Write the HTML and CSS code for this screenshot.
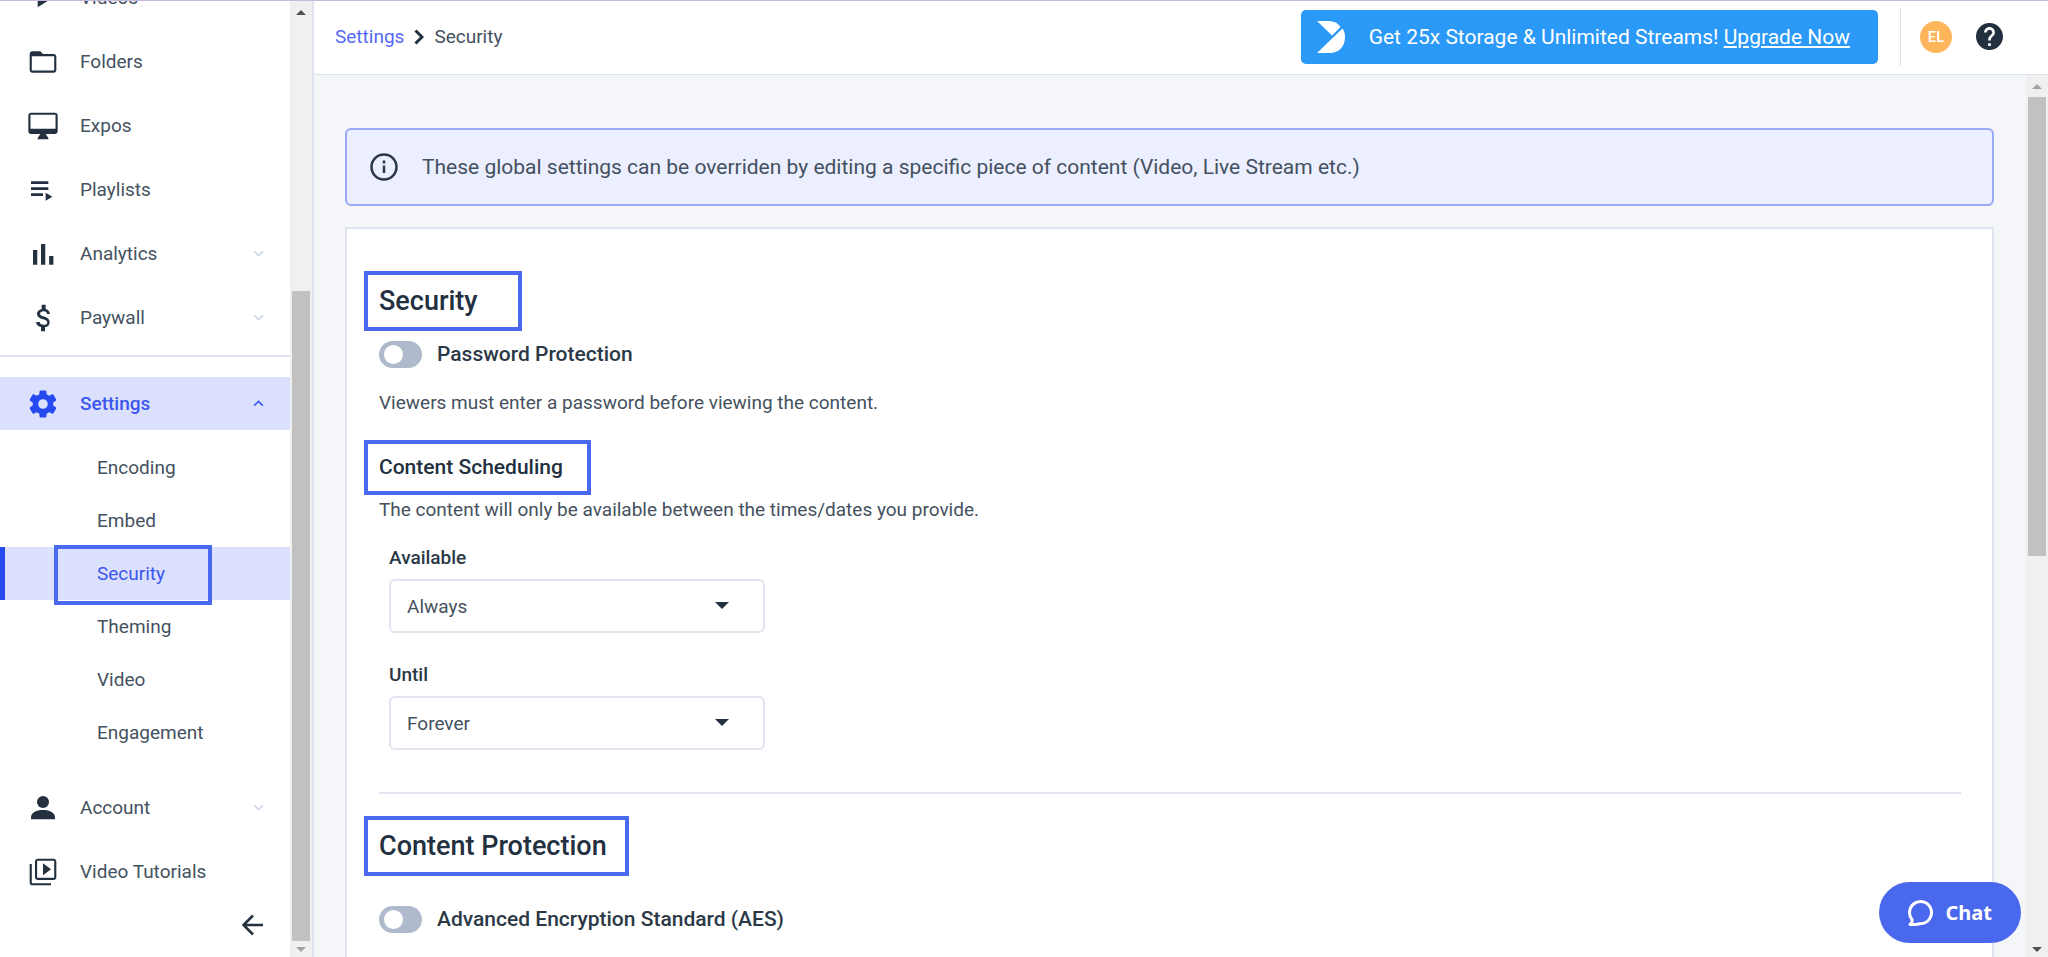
FILE: index.html
```html
<!DOCTYPE html>
<html lang="en">
<head>
    <meta charset="UTF-8">
    <meta name="viewport" content="width=device-width, initial-scale=1.0">
    <title>Security Settings</title>
    <link rel="stylesheet" href="styles.css">
</head>
<body>
    <aside class="sidebar">
        <nav class="menu">
            <a class="menu-item" href="#">
                <svg class="icon" viewBox="0 0 24 24"><path d="M8 5v14l11-7z"/></svg>
                <span>Videos</span>
            </a>
            <a class="menu-item" href="#">
                <svg class="icon" viewBox="0 0 24 24"><path d="M20 6h-8l-2-2H4c-1.100 0-1.990.900-1.990 2L2 18c0 1.100.900 2 2 2h16c1.100 0 2-.900 2-2V8c0-1.100-.900-2-2-2zm.400 12.400H3.600V7.600h16.800v10.800z"/></svg>
                <span>Folders</span>
            </a>
            <a class="menu-item" href="#">
                <svg class="icon" viewBox="0 0 24 24"><path d="M21 2H3c-1.100 0-2 .900-2 2v12c0 1.100.900 2 2 2h7l-2 3v1h8v-1l-2-3h7c1.100 0 2-.900 2-2V4c0-1.100-.900-2-2-2zm.400 12H2.600V3.600h18.800V14z"/></svg>
                <span>Expos</span>
            </a>
            <a class="menu-item" href="#">
                <svg class="icon" viewBox="0 0 24 24"><path d="M3 5.500h13v2H3zM3 10h13v2H3zM3 14.500h9v2H3zM14 14v6l5-3z"/></svg>
                <span>Playlists</span>
            </a>
            <a class="menu-item" href="#">
                <svg class="icon" viewBox="0 0 24 24"><path d="M4.500 9h3.200v11H4.500zM10.500 4.500h3.200V20h-3.200zM16.600 13.500h3.200V20h-3.200z"/></svg>
                <span>Analytics</span>
                <svg class="chevron" viewBox="0 0 10 6"><path d="M1 1l4 4 4-4"/></svg>
            </a>
            <a class="menu-item" href="#">
                <svg class="icon" viewBox="0 0 24 24"><path d="M12.300 10.900c-2.270-.590-3-1.200-3-2.150 0-1.090 1.010-1.850 2.700-1.850 1.780 0 2.440.850 2.500 2.100h2.210c-.070-1.720-1.120-3.300-3.210-3.810V2h-3v3.160c-1.940.420-3.500 1.680-3.500 3.610 0 2.310 1.910 3.460 4.700 4.130 2.500.600 3 1.480 3 2.410 0 .690-.490 1.790-2.700 1.790-2.060 0-2.870-.920-2.980-2.100H6.320c.120 2.190 1.760 3.420 3.680 3.830V22h3v-3.150c1.950-.370 3.500-1.500 3.500-3.550 0-2.840-2.430-3.810-4.200-4.400z" transform="translate(.5 0)"/></svg>
                <span>Paywall</span>
                <svg class="chevron" viewBox="0 0 10 6"><path d="M1 1l4 4 4-4"/></svg>
            </a>
            <hr class="menu-divider">
            <a class="menu-item active" href="#">
                <svg class="icon" viewBox="0 0 24 24"><path d="M19.600 13c.04-.32.060-.65.060-1s-.02-.68-.07-1l2.200-1.700c.2-.16.25-.44.130-.66l-2.100-3.640c-.13-.23-.4-.3-.63-.23l-2.600 1.050c-.54-.42-1.120-.76-1.760-1.020l-.4-2.500c-.04-.25-.25-.4-.5-.4h-3.900c-.25 0-.45.150-.49.400l-.4 2.500c-.64.260-1.220.600-1.760 1.020L4.780 4.770c-.23-.08-.5 0-.63.230L2.050 8.640c-.13.220-.08.500.130.660L4.400 11c-.05.320-.08.660-.08 1s.02.680.070 1l-2.210 1.700c-.2.160-.25.440-.13.660l2.100 3.640c.13.230.4.300.63.230l2.600-1.050c.54.420 1.120.760 1.760 1.020l.4 2.500c.04.250.24.400.49.400h3.900c.25 0 .46-.15.500-.4l.4-2.500c.64-.26 1.220-.6 1.760-1.020l2.600 1.050c.23.080.5 0 .63-.23l2.100-3.640c.12-.22.070-.5-.13-.66zM12 15.600a3.600 3.600 0 1 1 0-7.200 3.600 3.600 0 0 1 0 7.200z"/></svg>
                <span>Settings</span>
                <svg class="chevron" viewBox="0 0 10 6"><path d="M1 5l4-4 4 4"/></svg>
            </a>
            <div class="submenu">
                <a href="#">Encoding</a>
                <a href="#">Embed</a>
                <a class="current" href="#">Security</a>
                <a href="#">Theming</a>
                <a href="#">Video</a>
                <a href="#">Engagement</a>
            </div>
            <a class="menu-item" href="#">
                <svg class="icon" viewBox="0 0 24 24"><circle cx="12" cy="7.500" r="4.500"/><path d="M3 20.500v-1.500c0-3.500 4-5.500 9-5.500s9 2 9 5.500v1.500z"/></svg>
                <span>Account</span>
                <svg class="chevron" viewBox="0 0 10 6"><path d="M1 1l4 4 4-4"/></svg>
            </a>
            <a class="menu-item" href="#">
                <svg class="icon" viewBox="0 0 24 24"><path d="M3.600 6H2v14c0 1.100.900 2 2 2h14v-1.600H3.600zM20 2H8c-1.100 0-2 .900-2 2v12c0 1.100.900 2 2 2h12c1.100 0 2-.900 2-2V4c0-1.100-.900-2-2-2zm.400 14.400H7.600V3.600h12.800zM12 5.500v9l6-4.500z"/></svg>
                <span>Video Tutorials</span>
            </a>
            <button class="collapse" type="button" aria-label="Collapse menu">
                <svg viewBox="0 0 22 22"><path d="M21 11H2M11 1.500L1.500 11l9.500 9.500"/></svg>
            </button>
        </nav>
        <div class="scrollbar sidebar-scroll">
            <span class="arrow up"></span>
            <span class="thumb"></span>
            <span class="arrow down light"></span>
        </div>
    </aside>

    <div class="page">
        <header class="topbar">
            <div class="breadcrumb">
                <a href="#">Settings</a>
                <svg viewBox="0 0 10 16"><path d="M1.500 1.500L8 8l-6.500 6.500"/></svg>
                <span>Security</span>
            </div>
            <div class="upgrade">
                <svg viewBox="0 0 28 32"><path d="M0 0h12c5 0 9 2 11.500 6L15 14.500z"/><path d="M25.500 7.500c2 3 2.500 5.500 2.500 8.500C28 25.500 22 32 13 32H0z"/></svg>
                <span>Get 25x Storage &amp; Unlimited Streams! <a href="#">Upgrade Now</a></span>
            </div>
            <div class="user">
                <button class="avatar" type="button">EL</button>
                <button class="help" type="button" aria-label="Help">
                    <svg viewBox="2 2 20 20"><path d="M12 2C6.480 2 2 6.480 2 12s4.480 10 10 10 10-4.480 10-10S17.520 2 12 2zm1 17h-2v-2h2v2zm2.070-7.750l-.900.920C13.450 12.900 13 13.500 13 15h-2v-.500c0-1.100.450-2.100 1.170-2.830l1.240-1.260c.370-.360.590-.860.590-1.410 0-1.100-.900-2-2-2s-2 .900-2 2H8c0-2.210 1.790-4 4-4s4 1.790 4 4c0 .880-.360 1.680-.930 2.250z"/></svg>
                </button>
            </div>
        </header>

        <div class="body">
            <main class="content">
                <div class="notice">
                    <svg viewBox="0 0 28 28"><circle cx="14" cy="14" r="12.500"/><path d="M14 12.500V20M14 7.500v3"/></svg>
                    <p>These global settings can be overriden by editing a specific piece of content (Video, Live Stream etc.)</p>
                </div>

                <form class="card">
                    <h2 class="marked security-title">Security</h2>
                    <label class="toggle">
                        <input type="checkbox">
                        <span>Password Protection</span>
                    </label>
                    <p class="help-text">Viewers must enter a password before viewing the content.</p>

                    <h3 class="marked">Content Scheduling</h3>
                    <p class="help-text">The content will only be available between the times/dates you provide.</p>

                    <div class="field">
                        <label for="available">Available</label>
                        <div class="select">
                            <select id="available">
                                <option>Always</option>
                            </select>
                            <svg viewBox="0 0 14 7"><path d="M0 0h14L7 7z"/></svg>
                        </div>
                    </div>
                    <div class="field">
                        <label for="until">Until</label>
                        <div class="select">
                            <select id="until">
                                <option>Forever</option>
                            </select>
                            <svg viewBox="0 0 14 7"><path d="M0 0h14L7 7z"/></svg>
                        </div>
                    </div>

                    <hr>

                    <h2 class="marked protection-title">Content Protection</h2>
                    <label class="toggle">
                        <input type="checkbox">
                        <span>Advanced Encryption Standard (AES)</span>
                    </label>
                </form>
            </main>
            <div class="scrollbar page-scroll">
                <span class="arrow up light"></span>
                <span class="thumb"></span>
                <span class="arrow down"></span>
            </div>
        </div>
    </div>

    <button class="chat" type="button">
        <svg viewBox="0 0 26 28"><path d="M2 25.500c2-1.500 2.500-3 2-5A11 11 0 1 1 13.500 24.500c-3 0-4 1.500-11.500 1z"/></svg>
        Chat
    </button>
</body>
</html>
```

FILE: styles.css
```css
*,
*::before,
*::after {
    box-sizing: border-box;
}

body {
    margin: 0;
    height: 100vh;
    display: flex;
    overflow: hidden;
    border-top: 1px solid #c9b8de;
    font-family: Roboto, 'Liberation Sans', sans-serif;
    font-size: 19px;
    line-height: 24px;
    color: #445160;
    background-color: #f5f6fa;
}

a {
    color: inherit;
    text-decoration: none;
}

button {
    border: none;
    padding: 0;
    background: none;
    font-family: inherit;
    cursor: pointer;
}

h2, h3, p {
    margin: 0;
}

/* Sidebar */
.sidebar {
    display: flex;
    flex: 0 0 314px;
    border-right: 2px solid #dfe4ef;
    background-color: #fff;
}

.menu {
    flex: 1;
    display: flex;
    flex-direction: column;
    justify-content: flex-end;
    overflow: hidden;
    padding-bottom: 6px;
}

.menu-item {
    display: flex;
    flex: none;
    align-items: center;
    height: 53px;
    margin-bottom: 11px;
    padding: 0 26px 0 27px;
}

.menu-item .icon {
    width: 32px;
    height: 32px;
    margin-right: 21px;
    fill: #22303f;
}

.chevron {
    width: 11px;
    height: 7px;
    margin-left: auto;
    fill: none;
    stroke: #cfd8ea;
    stroke-width: 1.5;
}

.menu-item.active {
    background-color: #dbe0fd;
    color: #3b57ee;
    font-weight: 500;
}

.menu-item.active .icon {
    fill: #264af0;
}

.menu-item.active .chevron {
    stroke: #3b57ee;
}

.menu-divider {
    flex: none;
    width: 100%;
    margin: 0 0 20px;
    border: none;
    border-top: 2px solid #e0e5f0;
}

.submenu {
    margin-bottom: 22px;
}

.submenu a {
    display: flex;
    align-items: center;
    height: 53px;
    padding-left: 97px;
}

.submenu .current {
    position: relative;
    background-color: #dbe0fd;
    color: #3b57ee;
    box-shadow: inset 5px 0 #264af0;
}

/* Frame around the current page link */
.submenu .current::after {
    content: "";
    position: absolute;
    top: -2px;
    left: 54px;
    width: 158px;
    height: 60px;
    border: 4px solid #4a69f0;
}

.menu-item:last-of-type {
    margin-bottom: 0;
}

.collapse {
    flex: none;
    align-self: flex-end;
    display: flex;
    align-items: center;
    height: 53px;
    margin-right: 26px;
}

.collapse svg {
    width: 22px;
    height: 22px;
    fill: none;
    stroke: #22303f;
    stroke-width: 2.5;
}

/* Scrollbars */
.scrollbar {
    flex: 0 0 22px;
    display: flex;
    flex-direction: column;
    align-items: center;
    background-color: #f0f0f0;
}

.thumb {
    width: 18px;
    background-color: #c1c1c1;
}

.arrow {
    flex: none;
    display: flex;
    align-items: center;
    justify-content: center;
    height: 22px;
}

.arrow::before {
    content: "";
    border: 5px solid transparent;
}

.arrow.up::before {
    border-top: none;
    border-bottom-color: #505050;
}

.arrow.down {
    height: 16px;
}

.arrow.down::before {
    border-bottom: none;
    border-top-color: #505050;
}

.arrow.up.light::before {
    border-bottom-color: #a3a3a3;
}

.arrow.down.light::before {
    border-top-color: #a3a3a3;
}

.sidebar-scroll .thumb {
    height: 68%;
    margin-top: auto;
}

.page-scroll .thumb {
    height: 52%;
    margin-bottom: auto;
}

/* Top bar */
.page {
    flex: 1;
    min-width: 0;
    display: flex;
    flex-direction: column;
}

.topbar {
    flex: none;
    display: flex;
    align-items: center;
    height: 74px;
    padding: 0 45px 2px 21px;
    border-bottom: 1px solid #dbe2ee;
    background-color: #fff;
}

.breadcrumb {
    display: flex;
    align-items: center;
    gap: 10px;
}

.breadcrumb a {
    color: #5468f5;
}

.breadcrumb svg {
    width: 10px;
    height: 16px;
    fill: none;
    stroke: #22303f;
    stroke-width: 3;
}

.upgrade {
    display: flex;
    align-items: center;
    gap: 24px;
    height: 54px;
    margin-left: auto;
    padding: 0 28px 0 16px;
    border-radius: 5px;
    background-color: #2a99f7;
    color: #fff;
    font-size: 21px;
}

.upgrade svg {
    width: 28px;
    height: 32px;
    fill: #fff;
}

.upgrade a {
    text-decoration: underline;
}

.user {
    display: flex;
    align-items: center;
    gap: 24px;
    height: 58px;
    margin-left: 22px;
    padding-left: 19px;
    border-left: 1px solid #dbe2ee;
}

.avatar {
    width: 32px;
    height: 32px;
    border-radius: 50%;
    background-color: #feb65c;
    color: #fff;
    font-size: 15px;
    font-weight: 500;
}

.help {
    display: flex;
}

.help svg {
    width: 27px;
    height: 27px;
    fill: #22303f;
}

/* Content */
.body {
    flex: 1;
    min-height: 0;
    display: flex;
}

.content {
    flex: 1;
    min-width: 0;
    display: flex;
    flex-direction: column;
    overflow: hidden;
    padding: 53px 32px 0 31px;
}

.notice {
    flex: none;
    display: flex;
    align-items: center;
    gap: 24px;
    height: 78px;
    margin-bottom: 21px;
    padding: 0 23px;
    border: 2px solid #9aaaf8;
    border-radius: 6px;
    background-color: #ecefff;
    font-size: 21px;
}

.notice svg {
    width: 28px;
    height: 28px;
    fill: none;
    stroke: #2b3947;
    stroke-width: 2.5;
}

.card {
    flex: 1 0 auto;
    padding: 42px 31px 24px 17px;
    border: 2px solid #dfe4ef;
    border-bottom: none;
    background-color: #fff;
}

.card > * {
    margin-left: 15px;
}

.card .marked {
    width: fit-content;
    margin-left: 0;
    padding: 0 24px 0 11px;
    border: 4px solid #4a69f0;
    color: #22303f;
    font-size: 21px;
    font-weight: 500;
    line-height: 47px;
}

.card h2.marked {
    padding-right: 18px;
    font-size: 27px;
    line-height: 52px;
}

.card .security-title.marked {
    padding-right: 40px;
}

.toggle {
    display: flex;
    align-items: center;
    gap: 15px;
    margin-top: 9px;
    color: #2b3947;
    font-size: 21px;
    font-weight: 500;
    line-height: 28px;
}

.toggle input {
    appearance: none;
    display: flex;
    align-items: center;
    width: 43px;
    height: 27px;
    margin: 0;
    padding: 0 5px;
    border-radius: 14px;
    background-color: #b0bacd;
}

.toggle input::before {
    content: "";
    width: 19px;
    height: 19px;
    border-radius: 50%;
    background-color: #fff;
}

.toggle input:checked {
    justify-content: flex-end;
    background-color: #264af0;
}

.toggle + .help-text {
    margin-top: 23px;
    margin-bottom: 25px;
}

.marked + .help-text {
    margin-top: 3px;
    margin-bottom: 24px;
}

.field {
    width: 376px;
    margin-left: 25px;
    margin-bottom: 30px;
}

.field label {
    display: block;
    margin-bottom: 9px;
    color: #2b3947;
    font-weight: 500;
}

.select {
    position: relative;
}

.select select {
    appearance: none;
    display: block;
    width: 100%;
    height: 54px;
    padding: 0 16px;
    border: 2px solid #dfe4ef;
    border-radius: 6px;
    background-color: #fff;
    color: #445160;
    font-family: inherit;
    font-size: 19px;
}

.select svg {
    position: absolute;
    top: 23px;
    right: 36px;
    width: 14px;
    height: 7px;
    fill: #22303f;
    pointer-events: none;
}

.card hr {
    height: 2px;
    margin: 42px 0 22px 15px;
    border: none;
    background-color: #dfe4ef;
}

.protection-title + .toggle {
    margin-top: 29px;
}

/* Chat button */
.chat {
    position: fixed;
    right: 27px;
    bottom: 14px;
    display: flex;
    align-items: center;
    gap: 12px;
    height: 61px;
    padding: 0 29px;
    border-radius: 31px;
    background-color: #4a68ee;
    color: #fff;
    font-family: 'Noto Sans', sans-serif;
    font-size: 20px;
    font-weight: 700;
}

.chat svg {
    width: 26px;
    height: 28px;
    fill: none;
    stroke: #fff;
    stroke-width: 3;
    stroke-linejoin: round;
}
```
